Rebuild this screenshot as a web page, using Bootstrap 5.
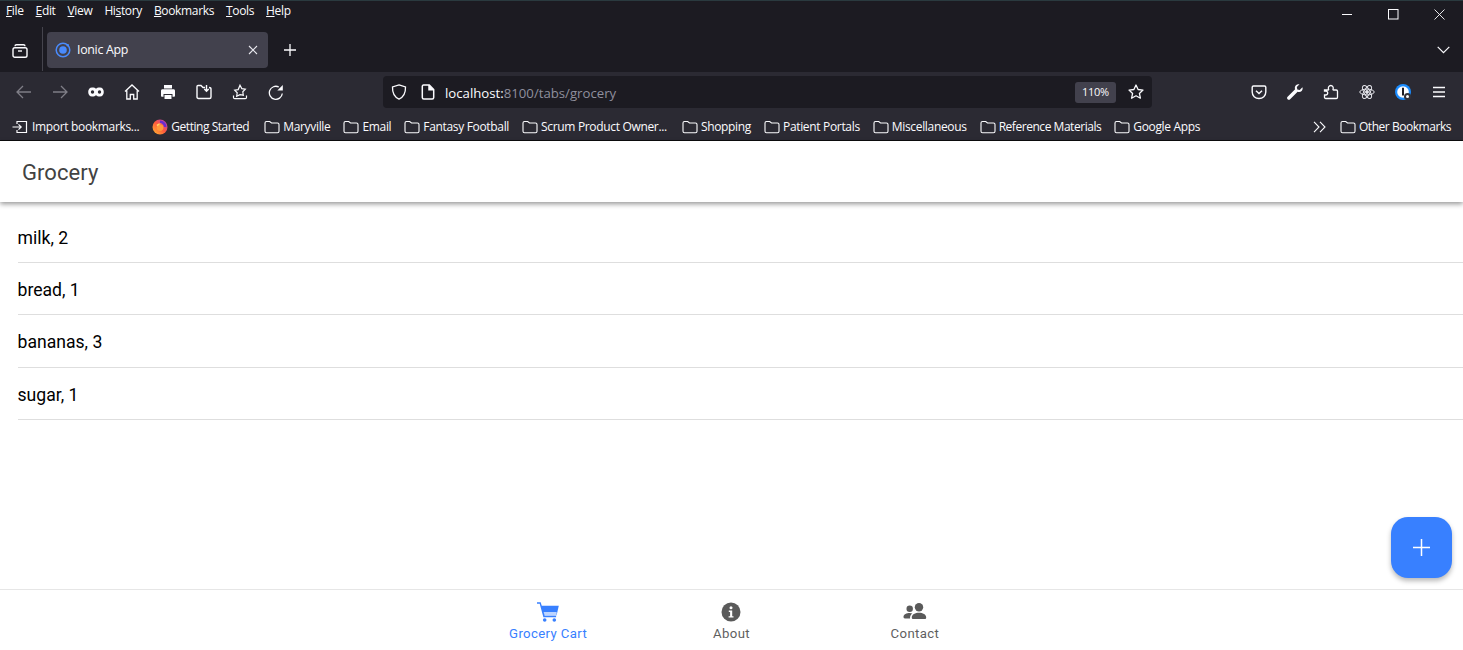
<!doctype html>
<html lang="en">
<head>
<meta charset="utf-8">
<title>Ionic App</title>
<link rel="stylesheet" href="https://cdn.jsdelivr.net/npm/bootstrap@5.3.0/dist/css/bootstrap.min.css">
<style>
html,body{height:100%;overflow:hidden}
body{font-family:"Open Sans","Liberation Sans",sans-serif;background:#fff}
.ff-shell{background:#1c1b22;color:#fbfbfe;font-size:12px}
.ff-shell svg{display:block;flex:none}
.ff-top{border-top:1px solid #2a3a3f}
.ff-menu{height:26px;padding-left:6px;gap:12px;letter-spacing:-.35px;line-height:20px}
.ff-menu span{white-space:nowrap}
.ff-winbtn{margin-left:auto;gap:35px;padding-right:18px;margin-top:8px}
.ff-tabs{height:45px;padding-top:5px}
.ff-view{width:43px;height:44px;border-right:1px solid #45444d;margin-top:-5px;padding:3px 3px 0 0}
.ff-tab{width:221px;height:36px;margin-left:4px;background:#42414d;border-radius:4px;padding:0 10px 0 8px;font-size:12.4px;letter-spacing:-.3px}
.ff-tabtxt{margin-left:6px;padding-top:1px}
.ff-newtab{margin:12px 0 0 16px}
.ff-chev{margin:14px 13px 0 auto}
.ff-nav{height:40px;background:#2b2a33}
.ff-btns{width:36px}
.ff-left{padding-left:6px;width:383px}
.ff-url{width:769px;height:32px;background:#1c1b22;border-radius:4px;padding:0 8px;font-size:13.2px}
.ff-urlicon{margin-left:14px}
.ff-urltxt{margin-left:10px;padding-top:4px}
.ff-url .dim{color:#8f8f9d}
.ff-zoom{width:41px;height:21px;background:#42414d;border-radius:3px;font-size:11px;letter-spacing:-.3px;margin-left:auto;margin-right:12px}
.ff-right{margin-left:auto;padding-right:6px}
.ff-marks{height:29px;background:#2b2a33;padding:2px 12px 0;gap:13px;letter-spacing:-.33px;border-bottom:1px solid #0c0c0d}
.ff-mark{gap:3px;white-space:nowrap}
.ff-imp{gap:4px}
.ff-tight{letter-spacing:-.46px}
.ff-long{margin-right:2px}
.ff-over{margin-left:auto;margin-right:1px}
.ap-main{min-height:0}
.ap-head{height:61px;background:#fff;padding:2px 0 0 22px;font-family:Roboto,sans-serif;font-size:22px;color:#424242;letter-spacing:.05px;box-shadow:0 2px 5px rgba(0,0,0,.42);z-index:2}
.ap-list{margin:8.5px 0 0 17.5px;--bs-list-group-border-color:#dedede;border-radius:0}
.ap-list .list-group-item{padding:1px 0 0;height:52.4px;line-height:53px;font-family:Roboto,sans-serif;font-size:17.6px;color:#000;background:transparent}
.ap-list .list-group-item:last-child{border-bottom-width:1px}
.ap-fab{right:11px;bottom:11px;width:61px;height:61px;background:#3880ff;border:0;border-radius:17px;padding:0 1px 1px 0;box-shadow:0 3px 5px rgba(0,0,0,.28)}
.ap-fab:hover{background:#3880ff}
.ap-tabs{height:61px;border-top:1px solid #e6e6e6;background:#fff;font-family:Roboto,sans-serif;font-size:13.2px;letter-spacing:.37px;color:#5f5f5f}
.ap-tab{width:183.4px;padding-top:12px;line-height:16px;gap:4px}
.ap-tab svg{display:block}
.ap-active{color:#3880ff}
</style>
</head>
<body class="d-flex flex-column">
<div class="ff-shell ff-top">
  <div class="ff-menu d-flex align-items-start">
    <span><u>F</u>ile</span><span><u>E</u>dit</span><span><u>V</u>iew</span><span>Hi<u>s</u>tory</span><span><u>B</u>ookmarks</span><span><u>T</u>ools</span><span><u>H</u>elp</span>
    <div class="ff-winbtn d-flex align-items-center">
      <svg width="11" height="11" viewBox="0 0 11 11"><path d="M0 5.500h10" stroke="#fbfbfe"/></svg>
      <svg width="11" height="11" viewBox="0 0 11 11"><rect x=".5" y=".5" width="9.500" height="9.500" fill="none" stroke="#fbfbfe"/></svg>
      <svg width="11" height="11" viewBox="0 0 11 11"><path d="M.5.5l10 10M10.500.5l-10 10" stroke="#fbfbfe" stroke-width=".9"/></svg>
    </div>
  </div>
  <div class="ff-tabs d-flex align-items-start">
    <div class="ff-view d-flex align-items-center justify-content-center">
      <svg width="16" height="16" viewBox="0 0 16 16" fill="none" stroke="#fbfbfe" stroke-width="1.400"><path d="M3 3.200c0-1 .5-1.500 1.500-1.500h7c1 0 1.500.5 1.500 1.500"/><rect x="1" y="4.700" width="14" height="9.600" rx="1.800"/><path d="M6 8h4"/></svg>
    </div>
    <div class="ff-tab d-flex align-items-center">
      <svg width="16" height="16" viewBox="0 0 16 16"><circle cx="8" cy="8" r="6.800" fill="none" stroke="#4a8bfc" stroke-width="1.500"/><circle cx="8" cy="8" r="3.800" fill="#4a8bfc"/><circle cx="12.800" cy="3.200" r="1.200" fill="#4a8bfc"/></svg>
      <span class="ff-tabtxt">Ionic App</span>
      <svg width="10" height="10" viewBox="0 0 10 10" class="ms-auto"><path d="M1 1l8 8M9 1l-8 8" stroke="#e8e8ee" stroke-width="1.100"/></svg>
    </div>
    <svg class="ff-newtab" width="12" height="12" viewBox="0 0 12 12"><path d="M6 0v12M0 6h12" stroke="#fbfbfe" stroke-width="1.300"/></svg>
    <svg class="ff-chev" width="13" height="8" viewBox="0 0 13 8"><path d="M.7.8l5.800 5.800L12.300.8" fill="none" stroke="#fbfbfe" stroke-width="1.200"/></svg>
  </div>
  <div class="ff-nav d-flex align-items-center">
    <div class="ff-left d-flex align-items-center">
      <div class="ff-btns d-flex justify-content-center"><svg width="16" height="14" viewBox="0 0 16 14" fill="none" stroke="#7f7e87" stroke-width="1.300"><path d="M15 7H1.500M7 1L1 7l6 6"/></svg></div>
      <div class="ff-btns d-flex justify-content-center"><svg width="16" height="14" viewBox="0 0 16 14" fill="none" stroke="#7f7e87" stroke-width="1.300"><path d="M1 7h13.500M9 1l6 6-6 6"/></svg></div>
      <div class="ff-btns d-flex justify-content-center"><svg width="16" height="10" viewBox="0 0 16 10"><path d="M4 .5h1.500C7 .5 7.500 1.700 8 1.700S9 .5 10.500.5H12c2.300 0 3.800 2 3.800 4.500S14.300 9.500 12 9.500h-1.500C9 9.500 8.500 8.300 8 8.300S7 9.500 5.500 9.500H4C1.700 9.500.2 7.500.2 5S1.700.5 4 .5z" fill="#fbfbfe"/><circle cx="4.500" cy="5" r="1.700" fill="#2b2a33"/><circle cx="11.500" cy="5" r="1.700" fill="#2b2a33"/></svg></div>
      <div class="ff-btns d-flex justify-content-center"><svg width="16" height="16" viewBox="0 0 16 16" fill="none" stroke="#fbfbfe" stroke-width="1.300"><path d="M1 7.500L8 1l7 6.500M2.800 6.500V15H6.300v-4.500h3.400V15h3.500V6.500"/></svg></div>
      <div class="ff-btns d-flex justify-content-center"><svg width="16" height="16" viewBox="0 0 16 16" fill="#fbfbfe"><path d="M4 1h8v3.500H4z"/><path d="M2.500 5.200h11c.9 0 1.500.6 1.500 1.500v5c0 .7-.5 1.100-1.100 1.100H12.500V10h-9v2.800H2.100c-.6 0-1.100-.4-1.100-1.100v-5c0-.9.6-1.500 1.500-1.500z"/><path d="M4.500 11h7v4h-7z"/></svg></div>
      <div class="ff-btns d-flex justify-content-center"><svg width="16" height="16" viewBox="0 0 16 16" fill="none" stroke="#fbfbfe" stroke-width="1.400"><path d="M1 4V2.500c0-.6.400-1 1-1h3l2 2h2M13 3.500c1.200 0 2 .6 2 1.500v8c0 .9-.6 1.500-1.500 1.500h-11C1.600 14.500 1 13.900 1 13V4"/><path d="M10.500 1v6M8.300 5l2.200 2.300L12.700 5"/></svg></div>
      <div class="ff-btns d-flex justify-content-center"><svg width="16" height="16" viewBox="0 0 16 16" fill="none" stroke="#fbfbfe" stroke-width="1.200"><path d="M8 1.200l1.800 3.400 3.500.6-2.500 2.600.5 3.400L8 10.700 4.700 12.200l.5-3.400-2.500-2.600 3.500-.6z"/><path d="M1.500 11.500v2c0 .7.500 1.200 1.200 1.200h10.600c.7 0 1.200-.5 1.200-1.200v-2"/></svg></div>
      <div class="ff-btns d-flex justify-content-center"><svg width="16" height="16" viewBox="0 0 16 16" fill="none" stroke="#fbfbfe" stroke-width="1.300"><path d="M14.300 9.500A6.500 6.500 0 1 1 10.800 3"/><path d="M14.800 1v5.500H9.300z" fill="#fbfbfe" stroke="none"/></svg></div>
    </div>
    <div class="ff-url d-flex align-items-center">
      <svg width="16" height="16" viewBox="0 0 16 16" fill="none" stroke="#fbfbfe" stroke-width="1.300"><path d="M8 .9l6.500 2.100c.2 6-1.800 10-6.500 12.100C3.300 13 1.300 9 1.500 3z"/></svg>
      <svg class="ff-urlicon" width="14" height="16" viewBox="0 0 14 16" fill="none" stroke="#fbfbfe" stroke-width="1.500"><path d="M2.500 1h5.800L12.700 5.500v8c0 .9-.6 1.500-1.500 1.500H2.800c-.9 0-1.500-.6-1.500-1.500V2.500C1.300 1.600 1.800 1 2.500 1z"/><path d="M8 1v4.800h4.500" fill="#fbfbfe"/></svg>
      <span class="ff-urltxt"><span>localhost:</span><span class="dim">8100/tabs/grocery</span></span>
      <span class="ff-zoom d-flex align-items-center justify-content-center">110%</span>
      <svg width="16" height="16" viewBox="0 0 16 16" fill="none" stroke="#fbfbfe" stroke-width="1.300"><path d="M8 1l2.100 4.500 4.900.6-3.600 3.300 1 4.800L8 11.800l-4.400 2.400 1-4.800L1 6.100l4.900-.6z" stroke-linejoin="round"/></svg>
    </div>
    <div class="ff-right d-flex align-items-center">
      <div class="ff-btns d-flex justify-content-center"><svg width="16" height="16" viewBox="0 0 16 16" fill="none" stroke="#fbfbfe" stroke-width="1.400"><path d="M2.500 2h11c.8 0 1.300.5 1.300 1.300V8c0 3.700-3 6.500-6.800 6.500S1.200 11.700 1.200 8V3.300C1.200 2.500 1.700 2 2.500 2z"/><path d="M5 6.700l3 2.900 3-2.900"/></svg></div>
      <div class="ff-btns d-flex justify-content-center"><svg width="16" height="16" viewBox="0 0 16 16" fill="#fbfbfe"><path d="M15.400 3.200l-2.700 2.700-2.400-.5-.5-2.400L12.500.3C10.300-.4 7.800 1.200 7.800 3.800c0 .6.100 1.100.3 1.500L.6 12.800c-.7.700-.7 1.800 0 2.500s1.800.7 2.500 0l7.500-7.500c.5.200 1 .3 1.500.3 2.700 0 4.200-2.500 3.300-4.900z"/></svg></div>
      <div class="ff-btns d-flex justify-content-center"><svg width="16" height="16" viewBox="0 0 16 16" fill="none" stroke="#fbfbfe" stroke-width="1.300"><path d="M1.500 6h3.600c.5 0 .7-.4.500-.8-.8-1.500.3-3.700 2.200-3.700s3 2.200 2.200 3.700c-.2.400 0 .8.500.8h2.800c.7 0 1.200.5 1.200 1.200v6.100c0 .7-.5 1.200-1.200 1.200H2.700c-.7 0-1.200-.5-1.200-1.200v-2.300h1.200c1.200 0 2-.8 2-1.900S3.900 7.200 2.700 7.200H1.500z"/></svg></div>
      <div class="ff-btns d-flex justify-content-center"><svg width="16" height="16" viewBox="0 0 16 16" fill="none" stroke="#e4e4ea" stroke-width="1"><ellipse cx="8" cy="8" rx="7.200" ry="2.900"/><ellipse cx="8" cy="8" rx="7.200" ry="2.900" transform="rotate(60 8 8)"/><ellipse cx="8" cy="8" rx="7.200" ry="2.900" transform="rotate(120 8 8)"/><circle cx="8" cy="8" r="1.400" fill="#e4e4ea"/></svg></div>
      <div class="ff-btns d-flex justify-content-center"><svg width="16" height="16" viewBox="0 0 16 16"><circle cx="8" cy="8" r="8" fill="#1a8cff"/><circle cx="8" cy="8" r="5.800" fill="#fbfbfe"/><path d="M7 3.800h2v7.600H7z" fill="#1c1b22"/><circle cx="12.500" cy="12.500" r="3.500" fill="#33323a"/><circle cx="12.500" cy="12.500" r="1.500" fill="#fbfbfe"/></svg></div>
      <div class="ff-btns d-flex justify-content-center"><svg width="14" height="12" viewBox="0 0 14 12"><path d="M1 1.500h12M1 6h12M1 10.500h12" stroke="#fbfbfe" stroke-width="1.300"/></svg></div>
    </div>
  </div>
  <div class="ff-marks d-flex align-items-center">
    <div class="ff-mark ff-imp d-flex align-items-center"><svg width="16" height="14" viewBox="0 0 16 14" fill="none" stroke="#fbfbfe" stroke-width="1.200"><path d="M5 4V1.500h9.500v11H5V10"/><path d="M.5 7h8.500M6.500 4.300L9.200 7l-2.700 2.700"/></svg><span>Import bookmarks...</span></div>
    <div class="ff-mark ff-long d-flex align-items-center ff-tight"><svg width="16" height="16" viewBox="0 0 16 16"><defs><linearGradient id="fx" x1="0" y1="1" x2="1" y2="0"><stop offset="0" stop-color="#ffbd2e"/><stop offset=".5" stop-color="#ff5a3c"/><stop offset="1" stop-color="#a838c9"/></linearGradient></defs><circle cx="8" cy="8" r="7.500" fill="url(#fx)"/><path d="M8 1.500c3.800 0 6.500 3 6.500 6.500h-2.500c0-2.300-1.800-4-4-4z" fill="#6a2bd0"/><circle cx="8" cy="8.600" r="3.400" fill="#ff9a3c"/><path d="M4.300 6c1.300-1.600 3.700-2 5.300-1-1.500 0-3.200.6-3.700 2.200z" fill="#ffd567"/></svg><span>Getting Started</span></div>
    <div class="ff-mark d-flex align-items-center"><svg width="16" height="14" viewBox="0 0 16 14" fill="none" stroke="#fbfbfe" stroke-width="1.100"><path d="M1 3c0-1 .6-1.500 1.500-1.500h3.200L7.500 3h6c.9 0 1.500.6 1.500 1.500v6.800c0 .9-.6 1.500-1.500 1.500h-11c-.9 0-1.500-.6-1.500-1.500z"/></svg><span>Maryville</span></div>
    <div class="ff-mark d-flex align-items-center"><svg width="16" height="14" viewBox="0 0 16 14" fill="none" stroke="#fbfbfe" stroke-width="1.100"><path d="M1 3c0-1 .6-1.500 1.500-1.500h3.200L7.500 3h6c.9 0 1.500.6 1.500 1.500v6.800c0 .9-.6 1.500-1.500 1.500h-11c-.9 0-1.500-.6-1.500-1.500z"/></svg><span>Email</span></div>
    <div class="ff-mark d-flex align-items-center"><svg width="16" height="14" viewBox="0 0 16 14" fill="none" stroke="#fbfbfe" stroke-width="1.100"><path d="M1 3c0-1 .6-1.500 1.500-1.500h3.200L7.500 3h6c.9 0 1.500.6 1.500 1.500v6.800c0 .9-.6 1.500-1.500 1.500h-11c-.9 0-1.500-.6-1.500-1.500z"/></svg><span>Fantasy Football</span></div>
    <div class="ff-mark ff-long d-flex align-items-center"><svg width="16" height="14" viewBox="0 0 16 14" fill="none" stroke="#fbfbfe" stroke-width="1.100"><path d="M1 3c0-1 .6-1.500 1.500-1.500h3.200L7.500 3h6c.9 0 1.500.6 1.500 1.500v6.800c0 .9-.6 1.500-1.500 1.500h-11c-.9 0-1.500-.6-1.500-1.500z"/></svg><span>Scrum Product Owner...</span></div>
    <div class="ff-mark d-flex align-items-center"><svg width="16" height="14" viewBox="0 0 16 14" fill="none" stroke="#fbfbfe" stroke-width="1.100"><path d="M1 3c0-1 .6-1.500 1.500-1.500h3.200L7.500 3h6c.9 0 1.500.6 1.500 1.500v6.800c0 .9-.6 1.500-1.500 1.500h-11c-.9 0-1.500-.6-1.500-1.500z"/></svg><span>Shopping</span></div>
    <div class="ff-mark d-flex align-items-center"><svg width="16" height="14" viewBox="0 0 16 14" fill="none" stroke="#fbfbfe" stroke-width="1.100"><path d="M1 3c0-1 .6-1.500 1.500-1.500h3.200L7.500 3h6c.9 0 1.500.6 1.500 1.500v6.800c0 .9-.6 1.500-1.500 1.500h-11c-.9 0-1.500-.6-1.500-1.500z"/></svg><span>Patient Portals</span></div>
    <div class="ff-mark d-flex align-items-center"><svg width="16" height="14" viewBox="0 0 16 14" fill="none" stroke="#fbfbfe" stroke-width="1.100"><path d="M1 3c0-1 .6-1.500 1.500-1.500h3.200L7.500 3h6c.9 0 1.500.6 1.500 1.500v6.800c0 .9-.6 1.500-1.500 1.500h-11c-.9 0-1.500-.6-1.500-1.500z"/></svg><span>Miscellaneous</span></div>
    <div class="ff-mark d-flex align-items-center ff-tight"><svg width="16" height="14" viewBox="0 0 16 14" fill="none" stroke="#fbfbfe" stroke-width="1.100"><path d="M1 3c0-1 .6-1.500 1.500-1.500h3.200L7.500 3h6c.9 0 1.500.6 1.500 1.500v6.800c0 .9-.6 1.500-1.500 1.500h-11c-.9 0-1.500-.6-1.500-1.500z"/></svg><span>Reference Materials</span></div>
    <div class="ff-mark d-flex align-items-center"><svg width="16" height="14" viewBox="0 0 16 14" fill="none" stroke="#fbfbfe" stroke-width="1.100"><path d="M1 3c0-1 .6-1.500 1.500-1.500h3.200L7.500 3h6c.9 0 1.500.6 1.500 1.500v6.800c0 .9-.6 1.500-1.500 1.500h-11c-.9 0-1.500-.6-1.500-1.500z"/></svg><span>Google Apps</span></div>
    <svg class="ff-over" width="13" height="12" viewBox="0 0 13 12" fill="none" stroke="#fbfbfe" stroke-width="1.100"><path d="M1 .8L6 6l-5 5.200M7 .8L12 6l-5 5.200"/></svg>
    <div class="ff-mark d-flex align-items-center ff-tight"><svg width="16" height="14" viewBox="0 0 16 14" fill="none" stroke="#fbfbfe" stroke-width="1.100"><path d="M1 3c0-1 .6-1.500 1.500-1.500h3.200L7.500 3h6c.9 0 1.500.6 1.500 1.500v6.800c0 .9-.6 1.500-1.500 1.500h-11c-.9 0-1.500-.6-1.500-1.500z"/></svg><span>Other Bookmarks</span></div>
  </div>
</div>
<div class="ap-main flex-grow-1 d-flex flex-column">
  <header class="ap-head d-flex align-items-center flex-shrink-0 position-relative">Grocery</header>
  <main class="flex-grow-1 position-relative">
    <ul class="ap-list list-group list-group-flush">
      <li class="list-group-item">milk, 2</li>
      <li class="list-group-item">bread, 1</li>
      <li class="list-group-item">bananas, 3</li>
      <li class="list-group-item">sugar, 1</li>
    </ul>
    <button type="button" class="ap-fab btn position-absolute d-flex align-items-center justify-content-center" aria-label="Add">
      <svg width="17" height="17" viewBox="0 0 17 17"><path d="M8.500 0v17M0 8.500h17" stroke="#fff" stroke-width="1.500"/></svg>
    </button>
  </main>
  <nav class="ap-tabs d-flex justify-content-center flex-shrink-0">
    <div class="ap-tab ap-active d-flex flex-column align-items-center">
      <svg width="22" height="20" viewBox="0 0 22 20" fill="#3880ff"><path d="M0 .2h3.700l3.900 13.600h11.500v1.400H6.400L2.700 1.700H0z"/><path d="M4 3.700h17.800l-2.200 9.500H6.700z"/><path d="M6.600 10h13v3H7.500z" fill="#bcd4ff"/><circle cx="7.700" cy="18" r="1.800"/><circle cx="17.300" cy="18" r="1.800"/></svg>
      <span>Grocery Cart</span>
    </div>
    <div class="ap-tab d-flex flex-column align-items-center">
      <svg width="20" height="20" viewBox="0 0 20 20"><circle cx="10" cy="10" r="9.500" fill="#5a5a5a"/><circle cx="10" cy="5.700" r="1.500" fill="#fff"/><path d="M7.800 8.600h3.400v5.600h1.300v1.300H7.600v-1.300h1.500V9.900H7.800z" fill="#fff"/></svg>
      <span>About</span>
    </div>
    <div class="ap-tab d-flex flex-column align-items-center">
      <svg width="24" height="20" viewBox="0 0 24 20" fill="#5a5a5a"><circle cx="16" cy="5.200" r="4.200"/><circle cx="6.700" cy="6.700" r="3.200"/><path d="M16 10.800c-3.800 0-7.200 1.700-7.200 4.600 0 1.100.6 1.600 1.500 1.600h11.400c.9 0 1.500-.5 1.500-1.600 0-2.900-3.400-4.600-7.200-4.600z"/><path d="M6.800 11c-3.200 0-6.300 1.300-6.300 3.800 0 1.100.5 1.700 1.400 1.700h5.100c0-2 .5-3.800 2.300-5-.7-.3-1.600-.5-2.500-.5z"/></svg>
      <span>Contact</span>
    </div>
  </nav>
</div>
<script src="https://cdn.jsdelivr.net/npm/bootstrap@5.3.0/dist/js/bootstrap.bundle.min.js"></script>
</body>
</html>
